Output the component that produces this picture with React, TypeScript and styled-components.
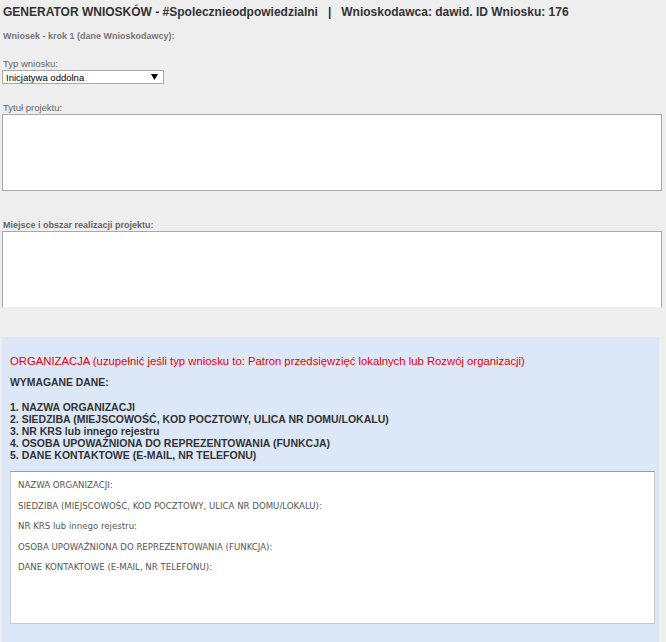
import React from 'react';
import styled, { createGlobalStyle } from 'styled-components';

const GlobalStyle = createGlobalStyle`
    html, body {
        margin: 0;
        padding: 0;
        background: #eeeeee;
    }
    body {
        font-family: 'Liberation Sans', Arial, sans-serif;
        color: #333;
    }
`;

const Page = styled.div`
    padding: 5px 0 0 0;
    overflow: hidden;
    height: 642px;
`;

const Form = styled.div`
    display: flex;
    flex-direction: column;
    padding: 0 4px 0 2px;
`;

const Header = styled.h1`
    margin: 0 0 0 1px;
    font-size: 12px;
    line-height: 14px;
    font-weight: bold;
    color: #333;
    white-space: nowrap;
`;

const StepTitle = styled.div`
    margin: 12px 0 0 1px;
    font-size: 9px;
    line-height: 11px;
    font-weight: bold;
    color: #777;
`;

const Label = styled.label<{ $bold?: boolean; $top: number }>`
    display: block;
    margin: ${p => p.$top}px 0 0 1px;
    font-size: ${p => (p.$bold ? '9px' : '9.5px')};
    line-height: 12px;
    font-weight: ${p => (p.$bold ? 'bold' : 'normal')};
    color: #666;
`;

const SelectBox = styled.div`
    box-sizing: border-box;
    width: 162px;
    height: 14px;
    display: flex;
    align-items: center;
    justify-content: space-between;
    padding: 0 5px 0 3px;
    background: #fff;
    border: 1px solid #a9a9a9;
    font-size: 9.5px;
    color: #000;
`;

const TextArea = styled.textarea<{ $openBottom?: boolean }>`
    box-sizing: border-box;
    display: block;
    width: 660px;
    height: 77px;
    margin: 0;
    background: #fff;
    border: 1px solid #a9a9a9;
    border-bottom-color: ${p => (p.$openBottom ? '#eee' : '#a9a9a9')};
    font-family: 'Liberation Sans', Arial, sans-serif;
    font-size: 10px;
    outline: none;
    resize: none;
`;

const Panel = styled.section`
    margin: 29px 7px 0 2px;
    padding: 18px 4px 20px 8px;
    background: #dce7f8;
`;

const Warning = styled.div`
    font-size: 11.3px;
    line-height: 13px;
    color: #f00000;
    white-space: nowrap;
`;

const Required = styled.div`
    margin-top: 8px;
    font-size: 10.4px;
    line-height: 13px;
    font-weight: bold;
    color: #333;
`;

const List = styled.ol`
    list-style: none;
    margin: 12px 0 0 0;
    padding: 0;
    font-size: 10.5px;
    line-height: 12px;
    font-weight: bold;
    color: #333;
`;

const Editor = styled.div`
    box-sizing: border-box;
    margin-top: 10px;
    height: 153px;
    padding: 7px 7px;
    background: #fff;
    border: 1px solid #c8c8c8;
    border-top-color: #9c9c9c;
    display: flex;
    flex-direction: column;
    gap: 8px;
`;

const EditorLine = styled.p`
    margin: 0;
    font-family: 'DejaVu Sans', Verdana, sans-serif;
    font-size: 8.6px;
    line-height: 12.5px;
    color: #555;
    white-space: nowrap;
`;

const ArrowIcon = () => (
    <svg width="7" height="6" viewBox="0 0 7 6">
        <path d="M0 0H7L3.5 6Z" fill="#000" />
    </svg>
);

const required = [
    '1. NAZWA ORGANIZACJI',
    '2. SIEDZIBA (MIEJSCOWOŚĆ, KOD POCZTOWY, ULICA NR DOMU/LOKALU)',
    '3. NR KRS lub innego rejestru',
    '4. OSOBA UPOWAŻNIONA DO REPREZENTOWANIA (FUNKCJA)',
    '5. DANE KONTAKTOWE (E-MAIL, NR TELEFONU)',
];

const fields = [
    'NAZWA ORGANIZACJI:',
    'SIEDZIBA (MIEJSCOWOŚĆ, KOD POCZTOWY, ULICA NR DOMU/LOKALU):',
    'NR KRS lub innego rejestru:',
    'OSOBA UPOWAŻNIONA DO REPREZENTOWANIA (FUNKCJA):',
    'DANE KONTAKTOWE (E-MAIL, NR TELEFONU):',
];

export default function App() {
    return (
        <Page>
            <GlobalStyle />
            <Form>
                <Header>
                    GENERATOR WNIOSKÓW - #Spolecznieodpowiedzialni&nbsp;&nbsp; | &nbsp;&nbsp;Wnioskodawca: dawid. ID Wniosku: 176
                </Header>
                <StepTitle>Wniosek - krok 1 (dane Wnioskodawcy):</StepTitle>

                <Label $top={16}>Typ wniosku:</Label>
                <SelectBox>
                    <span>Inicjatywa oddolna</span>
                    <ArrowIcon />
                </SelectBox>

                <Label $top={18}>Tytuł projektu:</Label>
                <TextArea readOnly />

                <Label $top={28} $bold>Miejsce i obszar realizacji projektu:</Label>
                <TextArea readOnly $openBottom />
            </Form>

            <Panel>
                <Warning>
                    ORGANIZACJA (uzupełnić jeśli typ wniosku to: Patron przedsięwzięć lokalnych lub Rozwój organizacji)
                </Warning>
                <Required>WYMAGANE DANE:</Required>
                <List>
                    {required.map(item => (
                        <li key={item}>{item}</li>
                    ))}
                </List>
                <Editor>
                    {fields.map(f => (
                        <EditorLine key={f}>{f}</EditorLine>
                    ))}
                </Editor>
            </Panel>
        </Page>
    );
}
